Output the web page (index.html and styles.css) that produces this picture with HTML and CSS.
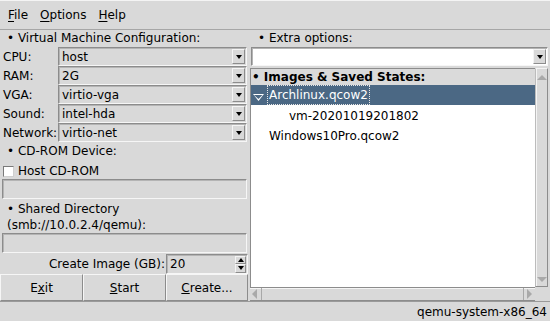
FILE: index.html
```html
<!DOCTYPE html>
<html lang="en">
	<head>
		<meta charset="UTF-8" />
		<meta name="viewport" content="width=device-width, initial-scale=1.0" />
		<title>QEMU Launcher</title>
		<link rel="stylesheet" href="styles.css">
	</head>
	<body>
		<div class="window">
			<div class="menubar">
				<span class="menu"><u>F</u>ile</span>
				<span class="menu"><u>O</u>ptions</span>
				<span class="menu"><u>H</u>elp</span>
			</div>

			<div class="main">
				<div class="left">
					<div class="group-label">• Virtual Machine Configuration:</div>
					<div class="field">
						<span class="field-label">CPU:</span>
						<div class="choice"><span class="value">host</span><span class="drop"></span></div>
					</div>
					<div class="field">
						<span class="field-label">RAM:</span>
						<div class="choice"><span class="value">2G</span><span class="drop"></span></div>
					</div>
					<div class="field">
						<span class="field-label">VGA:</span>
						<div class="choice"><span class="value">virtio-vga</span><span class="drop"></span></div>
					</div>
					<div class="field">
						<span class="field-label">Sound:</span>
						<div class="choice"><span class="value">intel-hda</span><span class="drop"></span></div>
					</div>
					<div class="field">
						<span class="field-label">Network:</span>
						<div class="choice"><span class="value">virtio-net</span><span class="drop"></span></div>
					</div>

					<div class="group-label cdrom">• CD-ROM Device:</div>
					<div class="check"><span class="check-box"></span>Host CD-ROM</div>
					<div class="input disabled"></div>

					<div class="group-label shared">• Shared Directory<br />(smb://10.0.2.4/qemu):</div>
					<div class="input disabled"></div>

					<div class="spin-row">
						<span class="spin-label">Create Image (GB):</span>
						<div class="spinner">
							<span class="value">20</span>
							<div class="spin-btns">
								<span class="spin-btn"><span class="arrow-up"></span></span>
								<span class="spin-btn"><span class="arrow-down"></span></span>
							</div>
						</div>
					</div>

					<div class="buttons">
						<button class="btn">E<u>x</u>it</button>
						<button class="btn"><u>S</u>tart</button>
						<button class="btn"><u>C</u>reate...</button>
					</div>
				</div>

				<div class="right">
					<div class="group-label extra">• Extra options:</div>
					<div class="input combo"><span class="drop"></span></div>

					<div class="browser">
						<div class="tree">
							<div class="tree-head">• Images &amp; Saved States:</div>
							<div class="tree-item selected">
								<span class="opener"></span>
								<span class="item-label focused">Archlinux.qcow2</span>
							</div>
							<div class="tree-item child"><span class="item-label">vm-20201019201802</span></div>
							<div class="tree-item"><span class="item-label">Windows10Pro.qcow2</span></div>
						</div>
						<div class="vscroll">
							<span class="scroll-arrow up"></span>
							<span class="scroll-arrow down"></span>
						</div>
						<div class="hscroll">
							<span class="hbtn"><span class="scroll-arrow left"></span></span>
							<span class="htrack"></span>
							<span class="hbtn"><span class="scroll-arrow right"></span></span>
						</div>
						<div class="corner"></div>
					</div>
				</div>
			</div>

			<div class="status">qemu-system-x86_64</div>
		</div>
	</body>
</html>
```

FILE: styles.css
```css
* {
	box-sizing: border-box;
}

body {
	margin: 0;
	font-family: "DejaVu Sans", sans-serif;
	font-size: 12px;
	color: #000;
	background: #d9d9d9;
}

.window {
	width: 550px;
	height: 321px;
	display: flex;
	flex-direction: column;
	overflow: hidden;
}

/* menu bar */

.menubar {
	height: 30px;
	flex: none;
	display: flex;
	align-items: center;
	gap: 12px;
	padding-left: 8px;
	border-bottom: 1px solid #a6a6a6;
	box-shadow: inset 0 1px #f4f4f4;
}

.menu u {
	text-decoration-thickness: 1px;
	text-underline-offset: 2px;
}

/* panels */

.main {
	height: 271px;
	flex: none;
	display: flex;
}

.left {
	width: 248px;
	margin-right: 2px;
	display: flex;
	flex-direction: column;
}

.right {
	width: 298px;
	display: flex;
	flex-direction: column;
}

.group-label {
	height: 17px;
	line-height: 17px;
	padding-left: 7px;
	white-space: nowrap;
}

.group-label.cdrom {
	height: 19px;
	line-height: 19px;
}

.group-label.shared {
	height: 34px;
	line-height: 16px;
	padding-top: 2px;
}

.group-label.extra {
	padding-left: 8px;
}

/* down box used by choices and inputs */

.choice,
.input,
.spinner {
	border-top: 1px solid #8c8c8c;
	border-left: 1px solid #8c8c8c;
	border-bottom: 1px solid #f6f6f6;
	border-right: 1px solid #f6f6f6;
	box-shadow: inset 1px 1px #b4b4b4;
}

.field {
	height: 19px;
	display: flex;
	align-items: center;
}

.field-label {
	width: 58px;
	padding-left: 3px;
	white-space: nowrap;
}

.choice {
	width: 189px;
	height: 19px;
	display: flex;
	align-items: center;
	padding: 1px 1px 1px 3px;
}

.value {
	flex: 1;
	line-height: 16px;
}

.drop {
	width: 13px;
	height: 15px;
	flex: none;
	display: flex;
	justify-content: center;
	align-items: flex-end;
	padding-bottom: 4px;
	background: #d9d9d9;
	border-top: 1px solid #f4f4f4;
	border-left: 1px solid #f4f4f4;
	border-bottom: 1px solid #8c8c8c;
	border-right: 1px solid #8c8c8c;
}

.drop::after {
	content: "";
	border-left: 3.5px solid transparent;
	border-right: 3.5px solid transparent;
	border-top: 4px solid #000;
}

/* check button */

.check {
	height: 18px;
	display: flex;
	align-items: center;
	gap: 4px;
	padding-left: 3px;
	padding-top: 2px;
}

.check-box {
	width: 11px;
	height: 11px;
	background: #fff;
	border-top: 1px solid #7a7a7a;
	border-left: 1px solid #7a7a7a;
	border-bottom: 1px solid #cfcfcf;
	border-right: 1px solid #cfcfcf;
}

.input {
	height: 20px;
	margin-left: 2px;
	width: 245px;
}

.input.disabled {
	background: #d9d9d9;
}

/* spinner */

.spin-row {
	height: 20px;
	margin-top: 1px;
	display: flex;
	align-items: center;
}

.spin-label {
	width: 166px;
	padding-right: 1px;
	text-align: right;
}

.spinner {
	width: 82px;
	height: 20px;
	display: flex;
	align-items: center;
	padding: 1px 1px 1px 3px;
}

.spin-btns {
	width: 11px;
	height: 17px;
	display: flex;
	flex-direction: column;
}

.spin-btn {
	flex: 1;
	display: flex;
	align-items: center;
	justify-content: center;
	border-top: 1px solid #f4f4f4;
	border-left: 1px solid #f4f4f4;
	border-bottom: 1px solid #8c8c8c;
	border-right: 1px solid #8c8c8c;
}

.arrow-up {
	border-left: 3px solid transparent;
	border-right: 3px solid transparent;
	border-bottom: 4px solid #000;
}

.arrow-down {
	border-left: 3px solid transparent;
	border-right: 3px solid transparent;
	border-top: 4px solid #000;
}

/* buttons */

.buttons {
	height: 27px;
	display: flex;
}

.btn {
	flex: none;
	width: 83px;
	height: 27px;
	font-family: "DejaVu Sans", sans-serif;
	font-size: 12px;
	color: #000;
	background: #d9d9d9;
	padding: 0;
	border-top: 1px solid #f6f6f6;
	border-left: 1px solid #f6f6f6;
	border-bottom: 1px solid #8c8c8c;
	border-right: 1px solid #8c8c8c;
}

.btn:last-child {
	width: 82px;
}

/* extra options combo */

.input.combo {
	width: 297px;
	height: 19px;
	margin-left: 1px;
	background: #fff;
	display: flex;
	justify-content: flex-end;
	padding: 1px;
}

/* tree browser */

.browser {
	margin-top: 2px;
	height: 233px;
	display: grid;
	grid-template-columns: 285px 13px;
	grid-template-rows: 219px 14px;
}

.tree {
	background: #fff;
	border-top: 1px solid #8c8c8c;
	border-left: 1px solid #8c8c8c;
	overflow: hidden;
}

.tree-head {
	height: 16px;
	line-height: 17px;
	padding-left: 1px;
	font-weight: bold;
	background: #dadada;
	white-space: nowrap;
}

.tree-item {
	height: 20px;
	display: flex;
	align-items: center;
	padding-left: 16px;
	padding-top: 1px;
	white-space: nowrap;
}

.tree-item.child {
	padding-left: 36px;
}

.tree-item.selected {
	background: #4b6884;
	color: #fff;
	padding-left: 2px;
	padding-top: 0;
}

.opener {
	width: 11px;
	height: 7px;
	margin-right: 3px;
	margin-top: 5px;
	background: #fff;
	clip-path: polygon(0 0, 100% 0, 50% 100%, 0 0, 1px 1px, calc(50%) calc(100% - 2px), calc(100% - 1.5px) 1px, 1px 1px);
}

.item-label {
	padding: 0 1px;
	line-height: 18px;
	border: 1px solid transparent;
}

.item-label.focused {
	border: 1px dotted #e8e8e8;
}

/* scrollbars */

.vscroll {
	display: flex;
	flex-direction: column;
	justify-content: space-between;
	align-items: center;
	padding: 6px 0 4px;
	border-top: 1px solid #f4f4f4;
	border-left: 1px solid #bcbcbc;
	border-right: 1px solid #8c8c8c;
	border-bottom: 1px solid #8c8c8c;
	box-shadow: inset 1px 0 #f4f4f4;
}

.hscroll {
	display: flex;
	border-top: 1px solid #8c8c8c;
	border-bottom: 1px solid #8c8c8c;
	box-shadow: inset 0 1px #f4f4f4;
}

.hbtn {
	width: 12px;
	flex: none;
	display: flex;
	align-items: center;
	justify-content: center;
	border-right: 1px solid #a8a8a8;
}

.hbtn:last-child {
	border-right: none;
	border-left: 1px solid #a8a8a8;
}

.htrack {
	flex: 1;
}

.scroll-arrow {
	width: 0;
	height: 0;
}

.scroll-arrow.up {
	border-left: 5px solid transparent;
	border-right: 5px solid transparent;
	border-bottom: 5px solid #a9a9a9;
}

.scroll-arrow.down {
	border-left: 5px solid transparent;
	border-right: 5px solid transparent;
	border-top: 5px solid #a9a9a9;
}

.scroll-arrow.left {
	border-top: 5px solid transparent;
	border-bottom: 5px solid transparent;
	border-right: 5px solid #a9a9a9;
}

.scroll-arrow.right {
	border-top: 5px solid transparent;
	border-bottom: 5px solid transparent;
	border-left: 5px solid #a9a9a9;
}

.corner {
	background: #d9d9d9;
}

/* status bar */

.status {
	flex: none;
	height: 20px;
	line-height: 19px;
	padding-top: 1px;
	padding-right: 3px;
	text-align: right;
	border-top: 1px solid #9a9a9a;
}
```
